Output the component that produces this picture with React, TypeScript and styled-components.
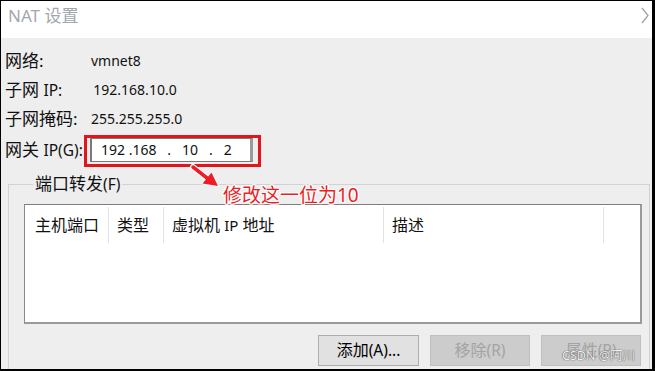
import React from "react";
import styled, { createGlobalStyle } from "styled-components";

const Global = createGlobalStyle`
  html, body { margin: 0; padding: 0; background: #fff; }
  body { font-family: "Noto Sans", "Noto Sans CJK SC", sans-serif; }
`;

const Frame = styled.div`
  position: relative;
  width: 655px;
  height: 371px;
  box-sizing: border-box;
  border-style: solid;
  border-color: #000;
  border-width: 1px 3px 2px 1px;
  background: #eeeeee;
  overflow: hidden;
  display: flex;
  flex-direction: column;
  font-family: "Noto Sans", "Noto Sans CJK SC", sans-serif;
  color: #111;
`;

const TitleBar = styled.div`
  height: 37px;
  flex: none;
  background: #fff;
  display: flex;
  justify-content: space-between;
  align-items: flex-start;
  padding: 3px 3px 0 7px;
  box-sizing: border-box;
`;

const Title = styled.div`
  font-size: 17px;
  line-height: 24px;
  color: #a3a7ad;
`;

const Chevron = styled.svg`
  margin-top: 3px;
`;

const Body = styled.div`
  flex: 1;
  display: flex;
  flex-direction: column;
  padding: 8px 0 0 4px;
  min-height: 0;
`;

const InfoRow = styled.div<{ $h?: number }>`
  display: grid;
  grid-template-columns: 85px auto;
  justify-content: start;
  align-items: center;
  height: ${(p) => p.$h ?? 29}px;
`;

const Label = styled.div`
  font-size: 17px;
  line-height: 22px;
  white-space: nowrap;
`;

const Lat = styled.span`
  font-size: 15.5px;
`;

const Value = styled.div`
  font-size: 14px;
  line-height: 20px;
  padding-left: 1px;
`;

const IpBox = styled.div`
  position: relative;
  width: 163px;
  height: 24px;
  box-sizing: border-box;
  background: #fff;
  border: 1px solid #7a7a7a;
  border-left-width: 2px;
  border-right-width: 3px;
  border-right-color: #9a9a9a;
  font-size: 14px;
  line-height: 22px;
  padding-left: 9px;
  white-space: pre;
`;

const RedMark = styled.div`
  position: absolute;
  left: -8px;
  top: -4px;
  right: -11px;
  bottom: -6px;
  border: 3px solid #e3141c;
  pointer-events: none;
`;

const Group = styled.fieldset`
  flex: 1;
  margin: 7px 2px 0 3px;
  padding: 10px 7px 0 15px;
  min-width: 0;
  border: 1px solid #d2d2d2;
  border-bottom: none;
  display: flex;
  flex-direction: column;
`;

const Legend = styled.legend`
  margin-left: 9px;
  padding: 0 2px;
  font-size: 17px;
  line-height: 20px;
`;

const ListBox = styled.div`
  height: 120px;
  box-sizing: border-box;
  background: #fff;
  border-style: solid;
  border-width: 1px 2px 2px 1px;
  border-color: #7e7e7e #9a9a9a #9a9a9a #8a8a8a;
`;

const HeaderRow = styled.div`
  display: grid;
  grid-template-columns: 84px 55px 220px 220px;
  margin-top: 2px;
`;

const HeaderCell = styled.div<{ $first?: boolean }>`
  height: 36px;
  box-sizing: border-box;
  border-right: 1px solid #e3e3e3;
  padding-left: ${(p) => (p.$first ? 10 : 8)}px;
  font-size: 16px;
  line-height: 36px;
  white-space: nowrap;
`;

const HeadLat = styled.span`
  font-size: 15px;
`;

const BtnLat = styled.span`
  font-size: 15.5px;
`;

const ButtonRow = styled.div`
  display: flex;
  justify-content: flex-end;
  gap: 11px;
  margin-top: 11px;
  margin-right: 1px;
`;

const Btn = styled.button<{ $w: number }>`
  width: ${(p) => p.$w}px;
  height: 31px;
  box-sizing: border-box;
  padding: 0;
  font-family: "Noto Sans", "Noto Sans CJK SC", sans-serif;
  font-size: 16px;
  line-height: 29px;
  border: 1px solid #adadad;
  background: #e1e1e1;
  color: #000;
  &:disabled {
    background: #cccccc;
    border-color: #bfbfbf;
    color: #a3a3a3;
  }
`;

const Note = styled.div`
  position: absolute;
  left: 222px;
  top: 183px;
  font-size: 19px;
  line-height: 22px;
  color: #ee1c25;
  white-space: nowrap;
  text-shadow: 1px 0 0 #fff, -1px 0 0 #fff, 0 1px 0 #fff, 0 -1px 0 #fff,
    1px 1px 0 #fff, -1px -1px 0 #fff, 1px -1px 0 #fff, -1px 1px 0 #fff;
`;

const Arrow = styled.svg`
  position: absolute;
  left: 184px;
  top: 160px;
`;

const Watermark = styled.div`
  position: absolute;
  left: 561px;
  bottom: 5px;
  font-size: 12.5px;
  line-height: 16px;
  color: rgba(255, 255, 255, 0.92);
  text-shadow: 0 0 1px #555, 0 0 1px #555;
  white-space: nowrap;
`;

export default function App() {
  return (
    <>
      <Global />
      <Frame>
        <TitleBar>
          <Title>NAT 设置</Title>
          <Chevron width="8" height="17" viewBox="0 0 8 17">
            <polyline points="1,1 7,8.5 1,16" fill="none" stroke="#a6a6a6" strokeWidth="1.4" />
          </Chevron>
        </TitleBar>
        <Body>
          <InfoRow>
            <Label>网络:</Label>
            <Value>vmnet8</Value>
          </InfoRow>
          <InfoRow>
            <Label>
              子网 <Lat>IP:</Lat>
            </Label>
            <Value>&thinsp;192.168.10.0</Value>
          </InfoRow>
          <InfoRow>
            <Label>子网掩码:</Label>
            <Value>255.255.255.0</Value>
          </InfoRow>
          <InfoRow $h={34}>
            <Label>
              网关 <Lat>IP(G):</Lat>
            </Label>
            <IpBox>
              {"192 .168   .   10   .   2"}
              <RedMark />
            </IpBox>
          </InfoRow>
          <Group>
            <Legend>
              端口转发<Lat>(F)</Lat>
            </Legend>
            <ListBox>
              <HeaderRow>
                <HeaderCell $first>主机端口</HeaderCell>
                <HeaderCell>类型</HeaderCell>
                <HeaderCell>
                  虚拟机 <HeadLat>IP</HeadLat> 地址
                </HeaderCell>
                <HeaderCell>描述</HeaderCell>
              </HeaderRow>
            </ListBox>
            <ButtonRow>
              <Btn $w={101}>
                添加<BtnLat>(A)...</BtnLat>
              </Btn>
              <Btn $w={100} disabled>
                移除<BtnLat>(R)</BtnLat>
              </Btn>
              <Btn $w={100} disabled>
                属性<BtnLat>(P)</BtnLat>
              </Btn>
            </ButtonRow>
          </Group>
        </Body>
        <Arrow width="40" height="34" viewBox="0 0 40 34">
          <g stroke="#fff" strokeWidth="2" strokeLinejoin="round">
            <line x1="8" y1="6" x2="22" y2="17" strokeWidth="6" strokeLinecap="round" />
            <polygon points="17.5,22.5 26.5,11.5 33,25" />
          </g>
          <line x1="8" y1="6" x2="22" y2="17" stroke="#ee1c25" strokeWidth="3.5" strokeLinecap="round" />
          <polygon points="17.5,22.5 26.5,11.5 33,25" fill="#ee1c25" />
        </Arrow>
        <Note>修改这一位为10</Note>
        <Watermark>CSDN @阿川</Watermark>
      </Frame>
    </>
  );
}
